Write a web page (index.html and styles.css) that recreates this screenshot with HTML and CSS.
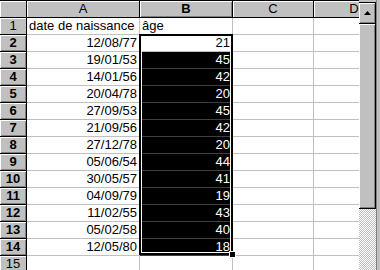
FILE: index.html
```html
<!DOCTYPE html>
<html lang="fr">
<head>
    <meta charset="UTF-8">
    <title>Feuil1</title>
    <link rel="stylesheet" href="styles.css">
</head>
<body>
    <div class="window">
        <div class="sheet">
            <div class="cells">
                <div class="cell head corner"></div>
                <div class="cell head">A</div>
                <div class="cell head on">B</div>
                <div class="cell head">C</div>
                <div class="cell head cut"><span>D</span></div>

                <div class="cell head">1</div>
                <div class="cell">date de naissance</div>
                <div class="cell">âge</div>
                <div class="cell"></div>
                <div class="cell cut"></div>

                <div class="cell head on">2</div>
                <div class="cell num">12/08/77</div>
                <div class="cell num">21</div>
                <div class="cell"></div>
                <div class="cell cut"></div>

                <div class="cell head on">3</div>
                <div class="cell num">19/01/53</div>
                <div class="cell num sel">45</div>
                <div class="cell"></div>
                <div class="cell cut"></div>

                <div class="cell head on">4</div>
                <div class="cell num">14/01/56</div>
                <div class="cell num sel">42</div>
                <div class="cell"></div>
                <div class="cell cut"></div>

                <div class="cell head on">5</div>
                <div class="cell num">20/04/78</div>
                <div class="cell num sel">20</div>
                <div class="cell"></div>
                <div class="cell cut"></div>

                <div class="cell head on">6</div>
                <div class="cell num">27/09/53</div>
                <div class="cell num sel">45</div>
                <div class="cell"></div>
                <div class="cell cut"></div>

                <div class="cell head on">7</div>
                <div class="cell num">21/09/56</div>
                <div class="cell num sel">42</div>
                <div class="cell"></div>
                <div class="cell cut"></div>

                <div class="cell head on">8</div>
                <div class="cell num">27/12/78</div>
                <div class="cell num sel">20</div>
                <div class="cell"></div>
                <div class="cell cut"></div>

                <div class="cell head on">9</div>
                <div class="cell num">05/06/54</div>
                <div class="cell num sel">44</div>
                <div class="cell"></div>
                <div class="cell cut"></div>

                <div class="cell head on">10</div>
                <div class="cell num">30/05/57</div>
                <div class="cell num sel">41</div>
                <div class="cell"></div>
                <div class="cell cut"></div>

                <div class="cell head on">11</div>
                <div class="cell num">04/09/79</div>
                <div class="cell num sel">19</div>
                <div class="cell"></div>
                <div class="cell cut"></div>

                <div class="cell head on">12</div>
                <div class="cell num">11/02/55</div>
                <div class="cell num sel">43</div>
                <div class="cell"></div>
                <div class="cell cut"></div>

                <div class="cell head on">13</div>
                <div class="cell num">05/02/58</div>
                <div class="cell num sel">40</div>
                <div class="cell"></div>
                <div class="cell cut"></div>

                <div class="cell head on">14</div>
                <div class="cell num">12/05/80</div>
                <div class="cell num sel">18</div>
                <div class="cell"></div>
                <div class="cell cut"></div>

                <div class="cell head">15</div>
                <div class="cell"></div>
                <div class="cell"></div>
                <div class="cell"></div>
                <div class="cell cut"></div>
            </div>

            <!-- selection frame B2:B14 sits on the same grid, over the cells -->
            <div class="overlay">
                <div class="selection"><span class="fill-handle"></span></div>
            </div>
        </div>

        <div class="vscroll">
            <div class="bar">
                <div class="split"></div>
                <div class="arrow">
                    <svg width="7" height="4" viewBox="0 0 7 4"><polygon points="3.5,0 7,4 0,4" fill="#000"/></svg>
                </div>
                <div class="thumb"></div>
                <div class="track"></div>
            </div>
            <div class="edge"></div>
        </div>
    </div>
</body>
</html>
```

FILE: styles.css
```css
body {
    margin: 0;
    background: #c0c0c0;
    font-family: "Liberation Sans", Arial, sans-serif;
    font-size: 13px;
    overflow: hidden;
}
.window {
    display: flex;
    height: 270px;
    overflow: hidden;
}
.sheet {
    display: grid;
    width: 359px;
    background: #fff;
    border-top: 1px solid #000;
}
.cells, .overlay {
    grid-area: 1 / 1;
    display: grid;
    grid-template-columns: 27px 113px 93px 81px 45px;
    grid-template-rows: repeat(16, 17px);
}
.overlay {
    pointer-events: none;
}
.cell {
    box-sizing: border-box;
    border-right: 1px solid #c0c0c0;
    border-bottom: 1px solid #c0c0c0;
    padding: 0 2px;
    line-height: 16px;
    white-space: nowrap;
    overflow: hidden;
}
.num {
    text-align: right;
}
.cut {
    border-right: none;
}
.head {
    background: #c0c0c0;
    border-color: #000;
    box-shadow: inset 1px 1px #fff;
    text-align: center;
    padding: 0;
}
.head.on {
    font-weight: bold;
    box-shadow: inset 1px 1px #fff, inset -1px -1px #808080;
}
.head.cut span {
    display: block;
    width: 80px;
    text-align: center;
}
.sel {
    background: #000;
    color: #fff;
    border-bottom-color: #3f3f3f;
}
.selection {
    grid-column: 3;
    grid-row: 3 / 16;
    margin: -1px 0 1px -1px;
    border: 2px solid #000;
    box-shadow: inset 0 0 0 1px #fff;
    position: relative;
}
.fill-handle {
    position: absolute;
    right: -5px;
    bottom: -5px;
    width: 5px;
    height: 5px;
    background: #000;
    border: 1px solid #fff;
}
.vscroll {
    display: flex;
    width: 21px;
    height: 270px;
}
.bar {
    width: 17px;
    display: flex;
    flex-direction: column;
}
.split {
    height: 2px;
    border-bottom: 1px solid #000;
}
.arrow, .thumb {
    box-sizing: border-box;
    background: #c0c0c0;
    border-right: 1px solid #000;
    border-bottom: 1px solid #000;
    box-shadow: inset 1px 1px #fff, inset -1px -1px #808080;
}
.arrow {
    height: 21px;
    display: flex;
    align-items: center;
    justify-content: center;
}
.thumb {
    height: 185px;
}
.track {
    flex: 1;
    background: repeating-conic-gradient(#c0c0c0 0 25%, #fff 0 50%) 0 0 / 2px 2px;
}
.edge {
    width: 3px;
    border-left: 1px solid #808080;
    background: #c0c0c0;
}
```
